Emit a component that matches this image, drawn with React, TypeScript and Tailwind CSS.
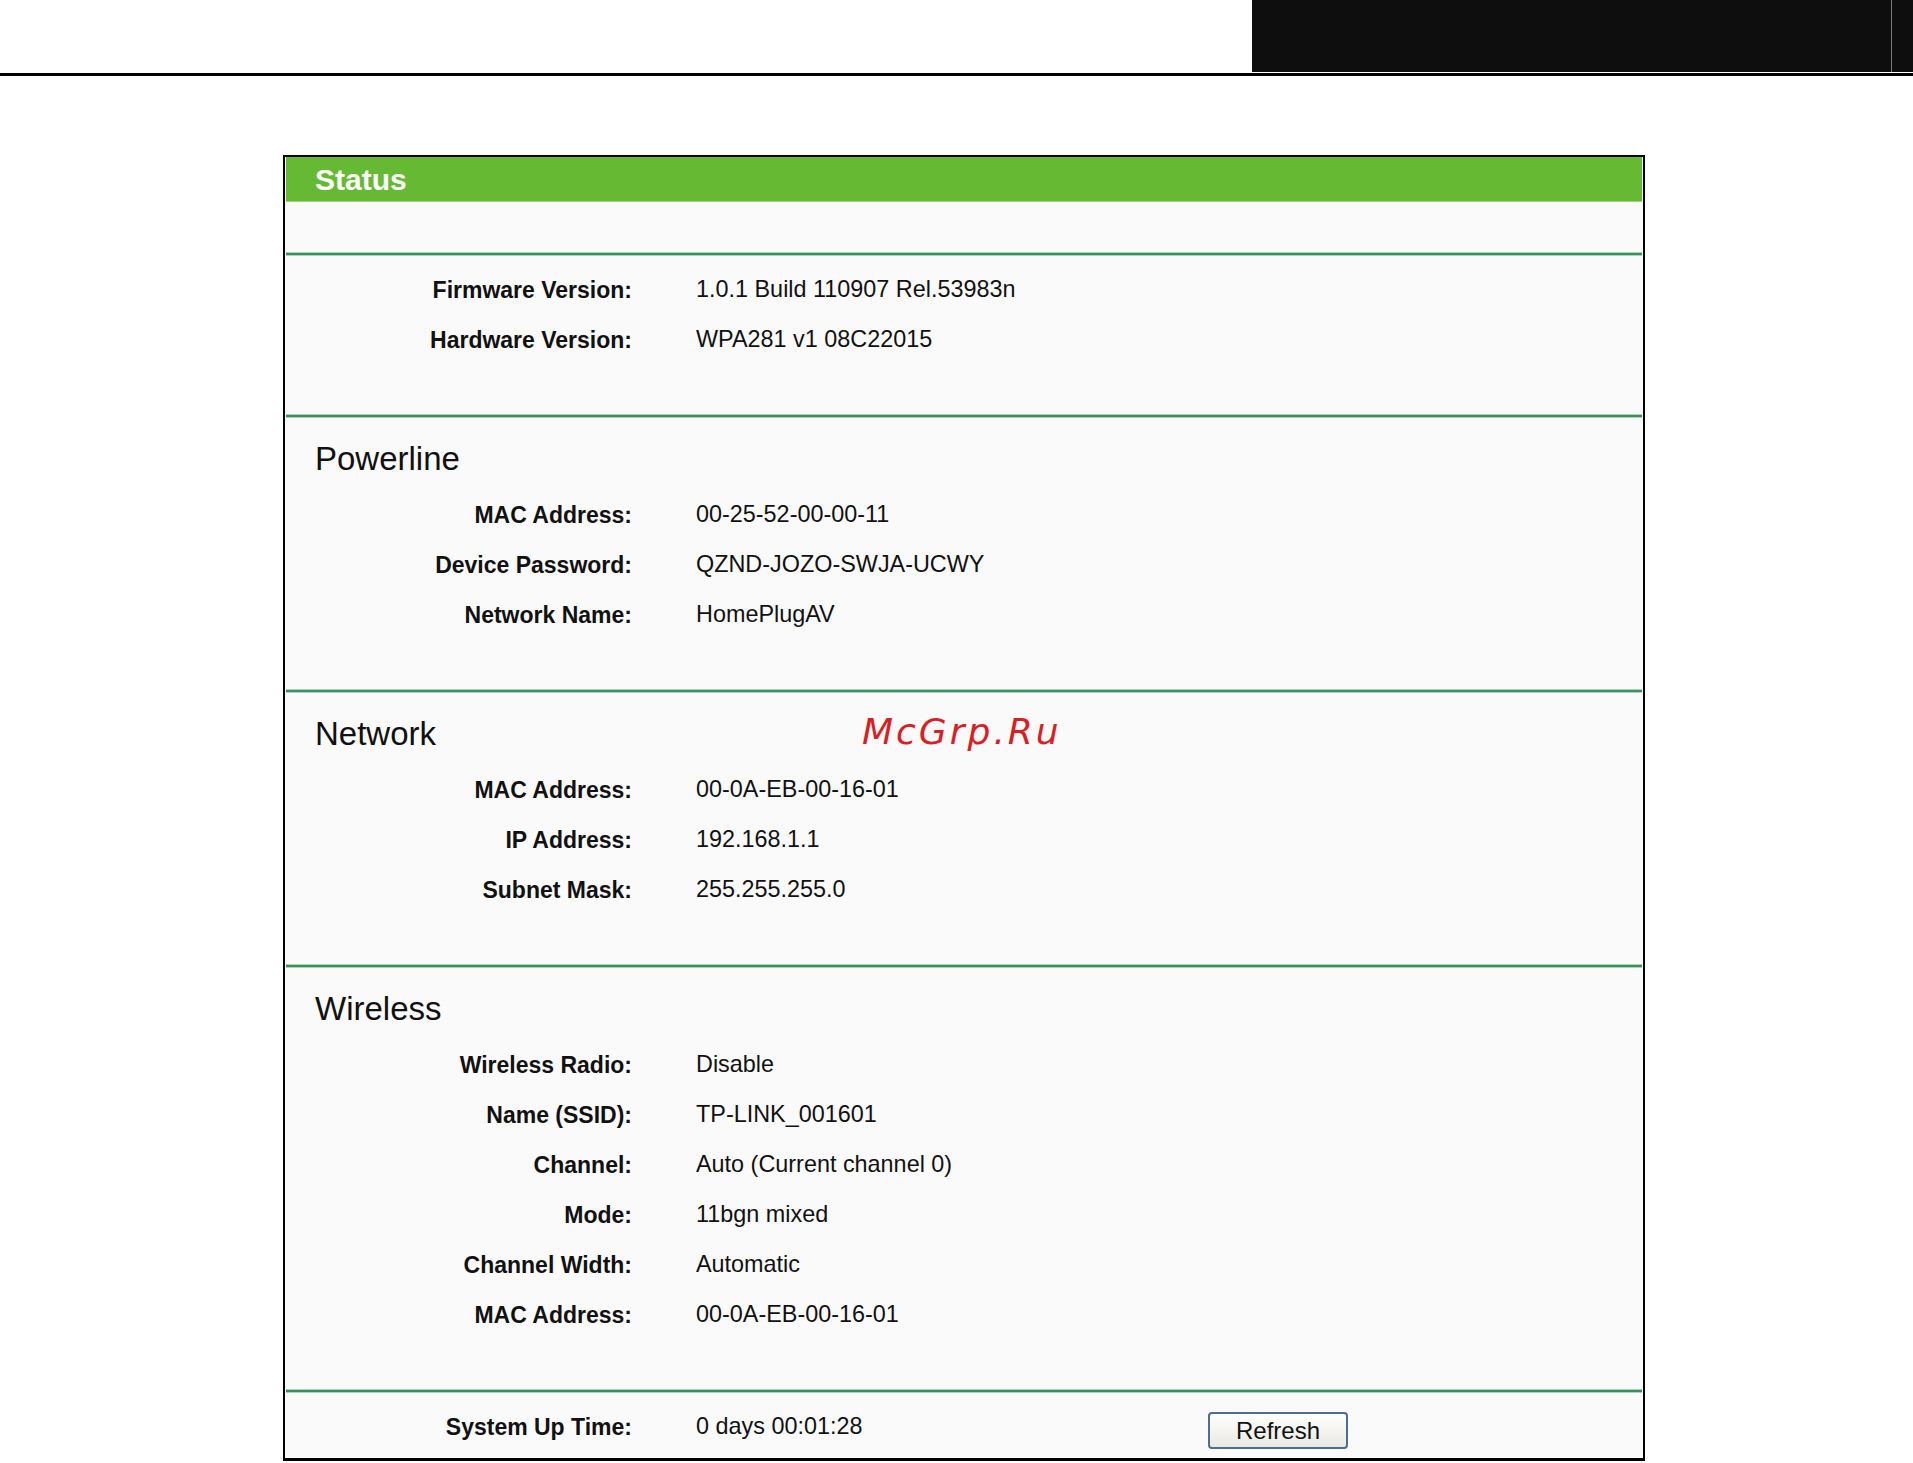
import React from "react";

type Row = [string, string];

const font = { fontFamily: '"Liberation Sans", Arial, sans-serif' };

function Line() {
  return <div className="h-[4px] bg-[#3f8d5c] border-y border-[#a8d6b6]" />;
}

function Rows({ rows }: { rows: Row[] }) {
  return (
    <>
      {rows.map(([l, v], i) => (
        <div key={i} className="h-[50px] flex items-center">
          <div className="w-[346px] shrink-0 text-right font-bold text-[23px] text-[#111]">{l}</div>
          <div className="pl-[64px] text-[23.4px] text-[#111]">{v}</div>
        </div>
      ))}
    </>
  );
}

function Section({ title, rows }: { title?: string; rows: Row[] }) {
  return (
    <div className="pt-[9px] pb-[49px]">
      {title && (
        <div className="h-[63px] flex items-center pl-[29px] text-[33px] text-[#111]">{title}</div>
      )}
      <Rows rows={rows} />
    </div>
  );
}

export default function App() {
  return (
    <div className="relative w-[1913px] h-[1463px] bg-white overflow-hidden" style={font}>
      <div className="h-[72px] flex justify-end">
        <div className="w-[661px] h-full bg-[#0e0e0e] flex">
          <div className="w-[639px] h-full" />
          <div className="w-[1px] h-full bg-[#7a7a7a]" />
        </div>
      </div>
      <div className="h-[1px] bg-white" />
      <div className="h-[3px] bg-black" />
      <div className="mt-[79px] ml-[283px] w-[1362px] border-x-2 border-t-2 border-b-[3px] border-black bg-[#fafafa] px-[1px]">
        <div className="h-[45px] bg-[#66b933] border-b border-[#9cd47c] flex items-center pl-[29px] text-white font-bold text-[30px]">
          Status
        </div>
        <div className="h-[50px]" />
        <Line />
        <Section
          rows={[
            ["Firmware Version:", "1.0.1 Build 110907 Rel.53983n"],
            ["Hardware Version:", "WPA281 v1 08C22015"],
          ]}
        />
        <Line />
        <Section
          title="Powerline"
          rows={[
            ["MAC Address:", "00-25-52-00-00-11"],
            ["Device Password:", "QZND-JOZO-SWJA-UCWY"],
            ["Network Name:", "HomePlugAV"],
          ]}
        />
        <Line />
        <Section
          title="Network"
          rows={[
            ["MAC Address:", "00-0A-EB-00-16-01"],
            ["IP Address:", "192.168.1.1"],
            ["Subnet Mask:", "255.255.255.0"],
          ]}
        />
        <Line />
        <Section
          title="Wireless"
          rows={[
            ["Wireless Radio:", "Disable"],
            ["Name (SSID):", "TP-LINK_001601"],
            ["Channel:", "Auto (Current channel 0)"],
            ["Mode:", "11bgn mixed"],
            ["Channel Width:", "Automatic"],
            ["MAC Address:", "00-0A-EB-00-16-01"],
          ]}
        />
        <Line />
        <div className="pt-[9px] pb-[6px]">
          <div className="h-[50px] flex items-center">
            <div className="w-[346px] shrink-0 text-right font-bold text-[23px] text-[#111]">System Up Time:</div>
            <div className="pl-[64px] w-[576px] shrink-0 text-[23.4px] text-[#111]">0 days 00:01:28</div>
            <button className="mt-[7px] w-[140px] h-[37px] shrink-0 rounded-[4px] border-2 border-[#4d6e90] bg-gradient-to-b from-white to-[#e9e8e2] text-[24px] text-[#111] flex items-center justify-center">
              Refresh
            </button>
          </div>
        </div>
      </div>
      <div
        className="absolute left-[862px] top-[714px] text-[36px] italic tracking-[3px] text-[#d81f26] leading-none"
        style={{ fontFamily: '"DejaVu Sans", sans-serif' }}
      >
        McGrp.Ru
      </div>
    </div>
  );
}
